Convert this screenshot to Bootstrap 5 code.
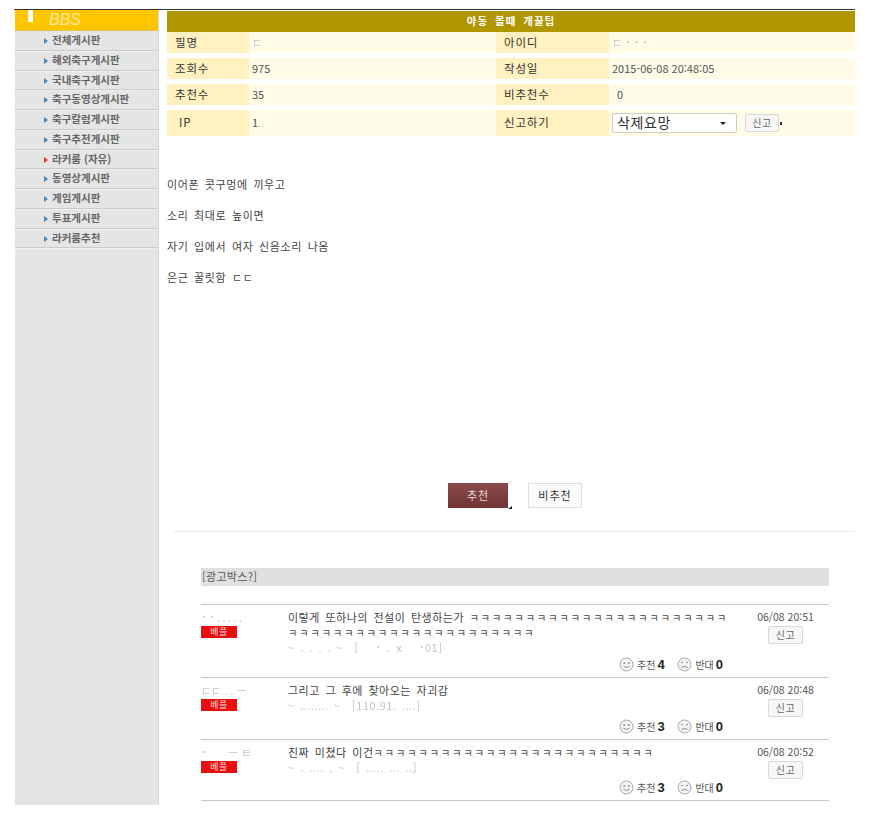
<!DOCTYPE html>
<html lang="ko">
<head>
<meta charset="utf-8">
<title>BBS</title>
<link href="https://cdn.jsdelivr.net/npm/bootstrap@5.3.0/dist/css/bootstrap.min.css" rel="stylesheet">
<style>
html,body{background:#fff;margin:0;}
body{font-family:"Noto Sans CJK KR","Liberation Sans",sans-serif;font-size:11px;color:#444;line-height:1.2;}
.page-wrap{width:841px;height:796px;margin:9px 0 0 14px;border-top:1px solid #333;}
.side-col{width:144px;margin-left:1px;background:#e5e5e5;flex:none;border-right:1px solid #d6d6d6;}
.side-head{height:21px;background:#ffc600;border-bottom:1px solid #e0c060;color:#ffe9a0;font:italic 16px/20px "Liberation Sans",sans-serif;padding-left:34px;position:relative;}
.side-head::before{content:"";position:absolute;left:13px;top:0;width:5px;height:12px;background:#fff;}
.side-item{height:19.75px;line-height:18.5px;padding-left:29px;border-bottom:1px solid #cbcbcb;box-shadow:0 1px 0 #efefef;font-weight:700;color:#666;font-size:10.5px;white-space:nowrap;}
.side-item::before{content:"";display:inline-block;border-left:4px solid #4a86b8;border-top:3px solid transparent;border-bottom:3px solid transparent;margin-right:4px;}
.side-item.on::before{border-left-color:#d8402a;}
.main-col{margin-left:8px;width:688px;flex:none;padding-top:1px;}
.main-head{height:21px;background:#b09600;color:#fff;font-weight:700;text-align:center;line-height:20px;font-size:10.5px;letter-spacing:1px;word-spacing:3px;}
.info-row{background:#fffbe6;margin-bottom:5px;height:21px;align-items:center;font-size:11px;}
.info-row.tall{height:26px;}
.lab-a{width:82px;height:100%;background:#fff2c0;padding-left:8px;color:#333;display:flex;align-items:center;letter-spacing:.8px;font-size:11.5px;}
.val-a{width:247px;padding-left:3px;color:#555;}
.lab-b{width:113px;height:100%;background:#fff2c0;padding-left:8px;color:#333;display:flex;align-items:center;letter-spacing:.8px;font-size:11.5px;}
.val-b{padding-left:3px;color:#555;flex:1;}
.hide-txt{color:#c4c4c4;filter:blur(.6px);}
.sel-box{width:125px;height:20px;background:#fff;border:1px solid #ccc;border-radius:2px;font-size:14px;line-height:17px;padding-left:4px;color:#333;position:relative;letter-spacing:.6px;}
.sel-box::after{content:"";position:absolute;right:10px;top:8px;border-top:3px solid #222;border-left:3px solid transparent;border-right:3px solid transparent;}
.rep-btn{width:35px;height:18px;border:1px solid #d8d8d8;border-radius:2px;background:#f7f7f7;color:#666;font-size:10px;line-height:16px;text-align:center;letter-spacing:.5px;}
.rep-main{position:relative;width:34px;}
.rep-main::after{content:"";position:absolute;right:-4px;top:7px;width:2px;height:3px;background:#333;}
.post-body{height:342px;padding-top:35px;font-size:11px;color:#444;letter-spacing:.6px;word-spacing:2px;}
.post-body p{margin:0 0 15px;height:16px;line-height:16px;}
.vote-row{height:24px;padding-left:281px;gap:20px;}
.btn-up{width:60px;height:25px;background:linear-gradient(#8a4b4b,#6f3434);color:#eadcdc;font-size:11px;line-height:24px;text-align:center;letter-spacing:1px;position:relative;}
.btn-up::after{content:"";position:absolute;right:-4px;bottom:-1px;border-bottom:3px solid #222;border-left:4px solid transparent;}
.btn-down{width:54px;height:25px;background:#fbfbfb;border:1px solid #ddd;color:#333;font-size:11px;line-height:23px;text-align:center;letter-spacing:1px;}
.split-line{margin:24px 0 0 7px;border-top:1px solid #e8e8e8;height:0;}
.ad-bar{margin:36px 26px 0 34px;height:18px;background:#e0e0e0;font-size:11px;line-height:17px;color:#555;padding-left:1px;letter-spacing:.3px;}
.cmt-wrap{margin:18px 26px 0 34px;border-top:1px solid #c8c8c8;}
.cmt-row{border-bottom:1px solid #c8c8c8;position:relative;}
.cmt-name{width:87px;padding-top:6px;flex:none;}
.best-tag{width:36px;height:12px;background:#e90d0d;color:#f6dede;font-size:9px;line-height:11px;text-align:center;margin-top:2px;letter-spacing:.5px;}
.cmt-text{width:447px;padding-top:5px;font-size:11px;line-height:15px;color:#444;flex:none;letter-spacing:.5px;word-spacing:2px;word-break:break-all;}
.kk{font-size:10px;letter-spacing:2.05px;}
.cmt-side{flex:1;text-align:center;padding-top:6px;font-size:10.5px;color:#555;padding-left:7px;}
.cmt-side .rep-btn{margin:2px auto 0;}
.vote-box{position:absolute;left:418px;bottom:5px;display:flex;align-items:center;font-size:10px;color:#555;}
.vote-box b{font:700 13px/14px "Liberation Sans",sans-serif;color:#222;margin:0 13px 0 2px;width:7px;}
.vote-box svg{margin-right:3px;}
</style>
</head>
<body>
<div class="page-wrap d-flex">
  <aside class="side-col">
    <div class="side-head">BBS</div>
    <div class="side-item">전체게시판</div>
    <div class="side-item">해외축구게시판</div>
    <div class="side-item">국내축구게시판</div>
    <div class="side-item">축구동영상게시판</div>
    <div class="side-item">축구칼럼게시판</div>
    <div class="side-item">축구추천게시판</div>
    <div class="side-item on">라커룸 (자유)</div>
    <div class="side-item">동영상게시판</div>
    <div class="side-item">게임게시판</div>
    <div class="side-item">투표게시판</div>
    <div class="side-item">라커룸추천</div>
  </aside>
  <main class="main-col">
    <div class="main-head mb-0">아동 볼때 개꿀팁</div>
    <div class="info-row d-flex mt-0">
      <div class="lab-a">필명</div><div class="val-a hide-txt">ㄷ</div>
      <div class="lab-b">아이디</div><div class="val-b hide-txt">ㄷ ˙ ˙ ˙</div>
    </div>
    <div class="info-row d-flex">
      <div class="lab-a">조회수</div><div class="val-a">975</div>
      <div class="lab-b">작성일</div><div class="val-b">2015-06-08 20:48:05</div>
    </div>
    <div class="info-row d-flex">
      <div class="lab-a">추천수</div><div class="val-a">35</div>
      <div class="lab-b">비추천수</div><div class="val-b ps-2">0</div>
    </div>
    <div class="info-row tall d-flex">
      <div class="lab-a ps-2">&nbsp;IP</div><div class="val-a">1<span class="hide-txt">..</span></div>
      <div class="lab-b">신고하기</div>
      <div class="val-b d-flex align-items-center gap-1">
        <div class="sel-box me-1">삭제요망</div><div class="rep-btn rep-main">신고</div>
      </div>
    </div>
    <div class="post-body">
      <p>이어폰 콧구멍에 끼우고</p>
      <p>소리 최대로 높이면</p>
      <p>자기 입에서 여자 신음소리 나옴</p>
      <p>은근 꿀릿함 ㄷㄷ</p>
    </div>
    <div class="vote-row d-flex">
      <div class="btn-up">추천</div>
      <div class="btn-down">비추천</div>
    </div>
    <div class="split-line"></div>
    <div class="ad-bar">[광고박스?]</div>
    <div class="cmt-wrap">
      <div class="cmt-row d-flex" style="height:73px">
        <div class="cmt-name"><div class="hide-txt">˙ ˙ . . . . .</div><div class="best-tag">베플</div></div>
        <div class="cmt-text">이렇게 또하나의 전설이 탄생하는가 <span class="kk">ㅋㅋㅋㅋㅋㅋㅋㅋㅋㅋㅋㅋㅋㅋㅋㅋㅋㅋㅋㅋㅋㅋㅋ</span><br><span class="kk">ㅋㅋㅋㅋㅋㅋㅋㅋㅋㅋㅋㅋㅋㅋㅋㅋㅋㅋㅋㅋㅋㅋ</span><br><span class="hide-txt">~ . . . . ~ &nbsp;[ &nbsp; ˙ . x &nbsp; ˙01]</span></div>
        <div class="cmt-side">06/08 20:51<div class="rep-btn">신고</div></div>
        <div class="vote-box">
          <svg width="15" height="15" viewBox="0 0 15 15"><circle cx="7.5" cy="7.5" r="6.5" fill="#f4f4f4" stroke="#aaa"/><circle cx="5.2" cy="6" r=".9" fill="#888"/><circle cx="9.8" cy="6" r=".9" fill="#888"/><path d="M4.5 9.2q3 2.6 6 0" fill="none" stroke="#888"/></svg>추천<b>4</b>
          <svg width="15" height="15" viewBox="0 0 15 15"><circle cx="7.5" cy="7.5" r="6.5" fill="#f4f4f4" stroke="#aaa"/><path d="M4 5l2 1M11 5l-2 1M4.5 10.5q3-2.4 6 0" fill="none" stroke="#888"/></svg>반대<b>0</b>
        </div>
      </div>
      <div class="cmt-row d-flex" style="height:62px">
        <div class="cmt-name"><div class="hide-txt">ㄷㄷ . . ㅡ</div><div class="best-tag">베플</div></div>
        <div class="cmt-text">그리고 그 후에 찾아오는 자괴감<br><span class="hide-txt">~ ........ ~ &nbsp;[110.91. ....]</span></div>
        <div class="cmt-side">06/08 20:48<div class="rep-btn">신고</div></div>
        <div class="vote-box">
          <svg width="15" height="15" viewBox="0 0 15 15"><circle cx="7.5" cy="7.5" r="6.5" fill="#f4f4f4" stroke="#aaa"/><circle cx="5.2" cy="6" r=".9" fill="#888"/><circle cx="9.8" cy="6" r=".9" fill="#888"/><path d="M4.5 9.2q3 2.6 6 0" fill="none" stroke="#888"/></svg>추천<b>3</b>
          <svg width="15" height="15" viewBox="0 0 15 15"><circle cx="7.5" cy="7.5" r="6.5" fill="#f4f4f4" stroke="#aaa"/><path d="M4 5l2 1M11 5l-2 1M4.5 10.5q3-2.4 6 0" fill="none" stroke="#888"/></svg>반대<b>0</b>
        </div>
      </div>
      <div class="cmt-row d-flex" style="height:61px">
        <div class="cmt-name"><div class="hide-txt">˙ &nbsp; &nbsp; &nbsp; ㅡ ㅌ</div><div class="best-tag">베플</div></div>
        <div class="cmt-text">진짜 미쳤다 이건<span class="kk">ㅋㅋㅋㅋㅋㅋㅋㅋㅋㅋㅋㅋㅋㅋㅋㅋㅋㅋㅋㅋㅋㅋㅋㅋㅋ</span><br><span class="hide-txt">~ . .... . ~ &nbsp;[ ..... ... ..]</span></div>
        <div class="cmt-side">06/08 20:52<div class="rep-btn">신고</div></div>
        <div class="vote-box">
          <svg width="15" height="15" viewBox="0 0 15 15"><circle cx="7.5" cy="7.5" r="6.5" fill="#f4f4f4" stroke="#aaa"/><circle cx="5.2" cy="6" r=".9" fill="#888"/><circle cx="9.8" cy="6" r=".9" fill="#888"/><path d="M4.5 9.2q3 2.6 6 0" fill="none" stroke="#888"/></svg>추천<b>3</b>
          <svg width="15" height="15" viewBox="0 0 15 15"><circle cx="7.5" cy="7.5" r="6.5" fill="#f4f4f4" stroke="#aaa"/><path d="M4 5l2 1M11 5l-2 1M4.5 10.5q3-2.4 6 0" fill="none" stroke="#888"/></svg>반대<b>0</b>
        </div>
      </div>
    </div>
  </main>
</div>
<script src="https://cdn.jsdelivr.net/npm/bootstrap@5.3.0/dist/js/bootstrap.bundle.min.js"></script>
</body>
</html>
